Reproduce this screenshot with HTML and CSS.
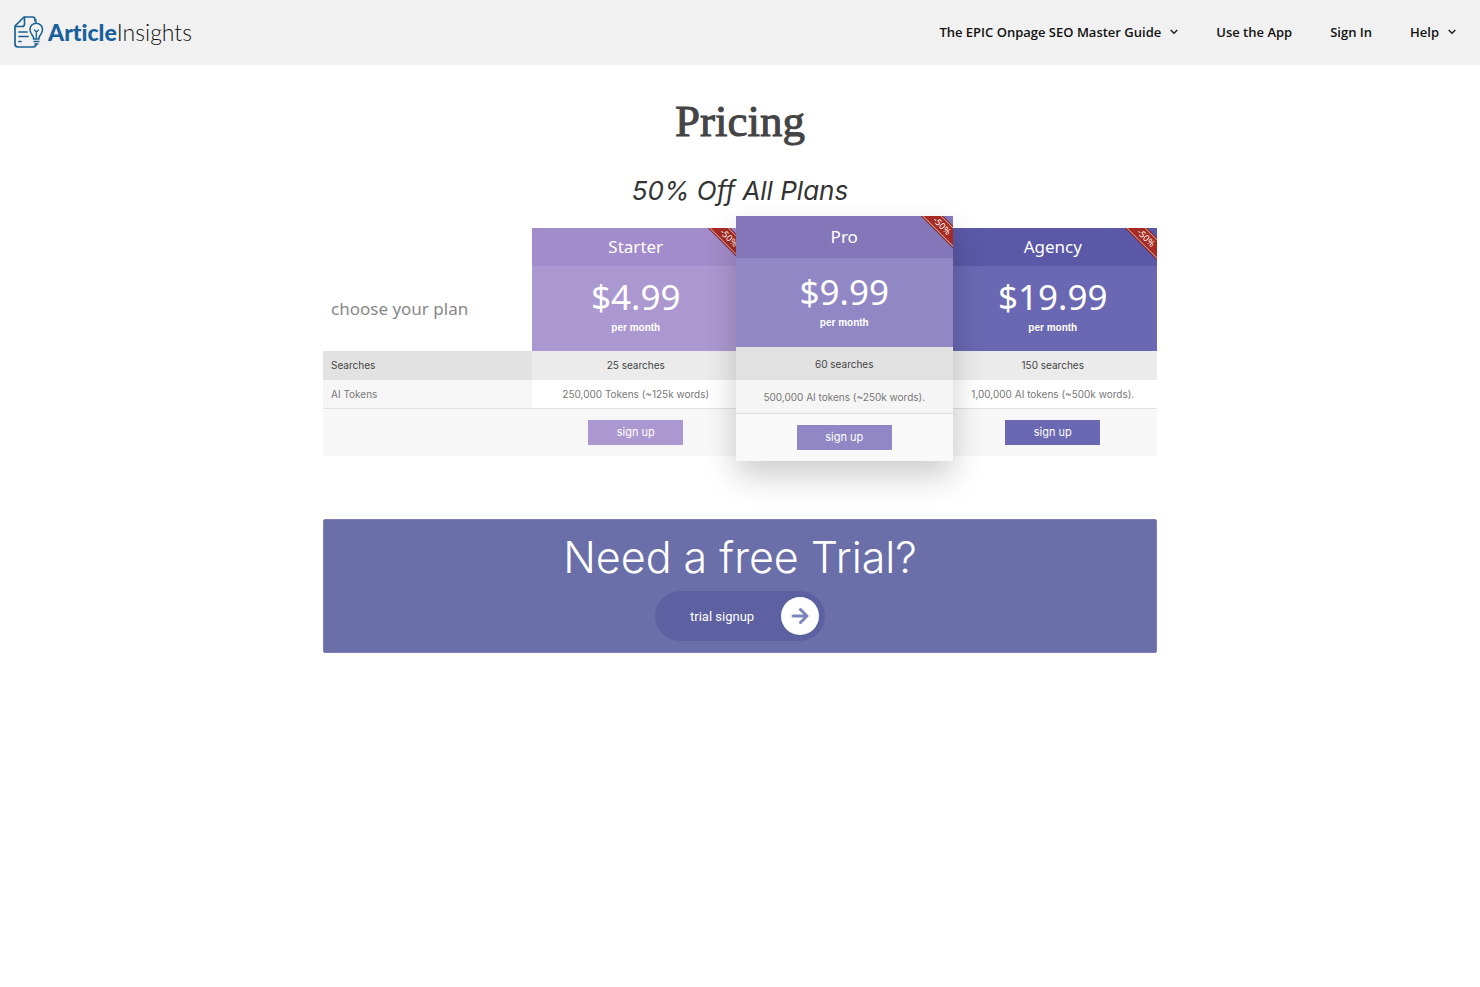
FILE: index.html
```html
<!DOCTYPE html>
<html lang="en">
<head>
    <meta charset="UTF-8">
    <meta name="viewport" content="width=device-width, initial-scale=1.0">
    <title>Pricing - ArticleInsights</title>
    <link rel="stylesheet" href="styles.css">
</head>
<body>

    <!-- Top Bar -->
    <header class="site-header">
        <a href="#" class="logo">
            <svg class="logo-icon" width="30" height="32" viewBox="0 0 30 32" fill="none" stroke="#1c6294" stroke-width="1.700" stroke-linecap="round" stroke-linejoin="round">
                <path d="M21 5V3.500Q21 1 18.500 1H10L1 10V28Q1 31 4 31H19Q22 31 22 28"/>
                <path d="M10.500 1.500V8Q10.500 10.500 8 10.500H1.500"/>
                <path d="M5 16H13M5 20.500H14M5 25.500H7"/>
                <path d="M19.500 23V21.500C19 19 16 18 16 13.500A6.200 6.200 0 0 1 28.500 13.500C28.500 18 25.500 19 25 21.500V23Z" stroke-width="1.500"/>
                <path d="M20 25.500H25M21 28H24M22.300 22V16L20.500 14M22.300 16L24.500 14M22 7V4" stroke-width="1.300"/>
            </svg>
            <span class="logo-text"><b>Article</b>Insights</span>
        </a>
        <nav class="main-nav">
            <a href="#">The EPIC Onpage SEO Master Guide
                <svg width="8" height="6" viewBox="0 0 8 6" fill="none" stroke="#222" stroke-width="1.500"><path d="M.7 1L4 4.300 7.300 1"/></svg>
            </a>
            <a href="#">Use the App</a>
            <a href="#">Sign In</a>
            <a href="#">Help
                <svg width="8" height="6" viewBox="0 0 8 6" fill="none" stroke="#222" stroke-width="1.500"><path d="M.7 1L4 4.300 7.300 1"/></svg>
            </a>
        </nav>
    </header>

    <main class="container">
        <h1>Pricing</h1>
        <h2>50% Off All Plans</h2>

        <!-- Pricing Table -->
        <section class="pricing">
            <div class="plan labels">
                <div class="plan-intro">choose your plan</div>
                <ul>
                    <li>Searches</li>
                    <li>AI Tokens</li>
                </ul>
                <div class="plan-footer"></div>
            </div>

            <div class="plan starter">
                <span class="ribbon"><span>-50%</span></span>
                <h3>Starter</h3>
                <div class="price"><strong>$4.99</strong><small>per month</small></div>
                <ul>
                    <li>25 searches</li>
                    <li>250,000 Tokens (~125k words)</li>
                </ul>
                <div class="plan-footer"><button type="button">sign up</button></div>
            </div>

            <div class="plan pro">
                <span class="ribbon"><span>-50%</span></span>
                <h3>Pro</h3>
                <div class="price"><strong>$9.99</strong><small>per month</small></div>
                <ul>
                    <li>60 searches</li>
                    <li>500,000 AI tokens (~250k words).</li>
                </ul>
                <div class="plan-footer"><button type="button">sign up</button></div>
            </div>

            <div class="plan agency">
                <span class="ribbon"><span>-50%</span></span>
                <h3>Agency</h3>
                <div class="price"><strong>$19.99</strong><small>per month</small></div>
                <ul>
                    <li>150 searches</li>
                    <li>1,00,000 AI tokens (~500k words).</li>
                </ul>
                <div class="plan-footer"><button type="button">sign up</button></div>
            </div>
        </section>

        <!-- Free Trial -->
        <section class="trial">
            <p>Need a free Trial?</p>
            <a href="#" class="trial-btn">
                <span class="trial-label">trial signup</span>
                <span class="trial-arrow">
                    <svg width="18" height="18" viewBox="0 0 18 18" fill="none" stroke="#7f85bb" stroke-width="3" stroke-linecap="round" stroke-linejoin="round"><path d="M2 9H16M9.500 2.500L16 9L9.500 15.500"/></svg>
                </span>
            </a>
        </section>
    </main>

</body>
</html>
```
FILE: styles.css
```css
/* Global Styles */
* {
    box-sizing: border-box;
}

body {
    font-family: Inter, "Open Sans", sans-serif;
    background-color: #fff;
    margin: 0;
}

a {
    color: inherit;
    text-decoration: none;
}

/* Header */
.site-header {
    display: flex;
    justify-content: space-between;
    align-items: center;
    height: 65px;
    padding: 0 24px 2px 14px;
    background-color: #f1f1f1;
}

.logo {
    display: flex;
    align-items: center;
    gap: 4px;
}

.logo-text {
    font-family: Lato, sans-serif;
    font-size: 23px;
    font-weight: 300;
    font-variant-ligatures: none;
    color: #111;
}

.logo-text b {
    font-weight: 900;
    color: #17609a;
}

.main-nav {
    display: flex;
    gap: 38px;
    font-family: "Open Sans", sans-serif;
    font-size: 13px;
    font-weight: 600;
    color: #111;
}

.main-nav a {
    display: flex;
    align-items: center;
    gap: 9px;
}

/* Headings */
.container {
    width: 90%;
    max-width: 834px;
    margin: 0 auto;
}

h1, h2, h3 {
    margin: 0;
    text-align: center;
}

h1 {
    padding-top: 28px;
    font-family: "Liberation Serif", serif;
    font-size: 45px;
    line-height: 56px;
    font-weight: 400;
    color: #444;
    -webkit-text-stroke: 1px #444;
}

h2 {
    margin-top: 26px;
    font-size: 26px;
    line-height: 32px;
    font-weight: 400;
    font-style: italic;
    color: #333;
}

/* Pricing Table */
.pricing {
    display: grid;
    grid-template-columns: repeat(4, 1fr);
    align-items: end;
    margin-top: 9px;
}

.plan {
    position: relative;
    margin-bottom: 5px;
    text-align: center;
    font-size: 10px;
    color: #777;
}

.plan h3 {
    font-family: "Noto Sans", sans-serif;
    font-size: 17px;
    line-height: 38px;
    font-weight: 400;
    color: #fff;
}

.price {
    display: flex;
    flex-direction: column;
    align-items: center;
    height: 85px;
    padding-top: 6px;
    color: #fff;
}

.price strong {
    font-family: "Noto Sans", sans-serif;
    font-size: 35px;
    line-height: 49px;
    font-weight: 400;
}

.price small {
    font-family: "Liberation Sans", sans-serif;
    font-size: 10px;
    line-height: 13px;
    font-weight: 700;
}

.plan ul {
    list-style: none;
    margin: 0;
    padding: 0;
}

.plan li {
    height: 29px;
    line-height: 29px;
    background-color: #fff;
    border-bottom: 1px solid #e1e1e1;
    white-space: nowrap;
}

.plan li:first-child {
    color: #444;
    background-color: #ebebeb;
    border-bottom: none;
}

.plan-footer {
    display: flex;
    justify-content: center;
    height: 47px;
    padding-top: 11px;
    background-color: #f7f7f7;
}

.plan-footer button {
    width: 95px;
    height: 25px;
    padding: 0 0 1px;
    border: none;
    font-family: inherit;
    font-size: 11px;
    color: #fff;
    cursor: pointer;
}

.labels {
    text-align: left;
}

.plan-intro {
    padding: 0 8px 29px;
    font-family: "Noto Sans", sans-serif;
    font-size: 17px;
    line-height: 26px;
    color: #888;
}

.labels li {
    padding-left: 8px;
    background-color: #f6f6f6;
}

.labels li:first-child {
    background-color: #e2e2e2;
}

.starter h3 {
    background-color: #a28ccb;
}

.starter .price, .starter button {
    background-color: #ac98d1;
}

.agency h3 {
    background-color: #5b58a7;
}

.agency .price, .agency button {
    background-color: #6a68b2;
}

/* Featured plan is a little larger than its neighbours */
.pro {
    z-index: 1;
    margin: 0 -4px;
    box-shadow: 0 15px 30px rgba(0, 0, 0, 0.2);
}

.pro h3 {
    line-height: 42px;
    background-color: #8377ba;
}

.pro .price {
    height: 89px;
    padding-top: 9px;
    background-color: #9187c5;
}

.pro li {
    height: 34px;
    line-height: 34px;
    background-color: #f5f5f5;
}

.pro li:first-child {
    height: 33px;
    background-color: #e1e1e1;
}

.pro .plan-footer {
    background-color: #f9f9f9;
}

.pro button {
    background-color: #9187c5;
}

/* Discount ribbon in the corner */
.ribbon {
    position: absolute;
    top: 0;
    right: 0;
    width: 32px;
    height: 32px;
    overflow: hidden;
}

.ribbon span {
    position: absolute;
    top: 3px;
    right: -19px;
    width: 60px;
    font-family: "Noto Sans", sans-serif;
    font-size: 9px;
    line-height: 12px;
    color: #fff;
    background-color: #a52a22;
    border: 1px solid #d9a59c;
    outline: 1px solid #8f2320;
    transform: rotate(45deg);
}

/* Free Trial */
.trial {
    display: flex;
    flex-direction: column;
    align-items: center;
    margin-top: 58px;
    padding: 11px 0;
    background-color: #6a6ea9;
    border: 1px solid #7d80b3;
    border-radius: 2px;
}

.trial p {
    margin: 0 0 8px;
    font-size: 43px;
    line-height: 52px;
    font-weight: 300;
    color: #fff;
}

.trial-btn {
    display: flex;
    align-items: center;
    justify-content: space-between;
    width: 170px;
    height: 50px;
    padding: 0 6px 0 35px;
    border-radius: 25px;
    background-color: #5d61a1;
}

.trial-label {
    font-family: Roboto, sans-serif;
    font-size: 13px;
    color: #fff;
}

.trial-arrow {
    display: flex;
    align-items: center;
    justify-content: center;
    width: 38px;
    height: 38px;
    border-radius: 50%;
    background-color: #fff;
}
```
